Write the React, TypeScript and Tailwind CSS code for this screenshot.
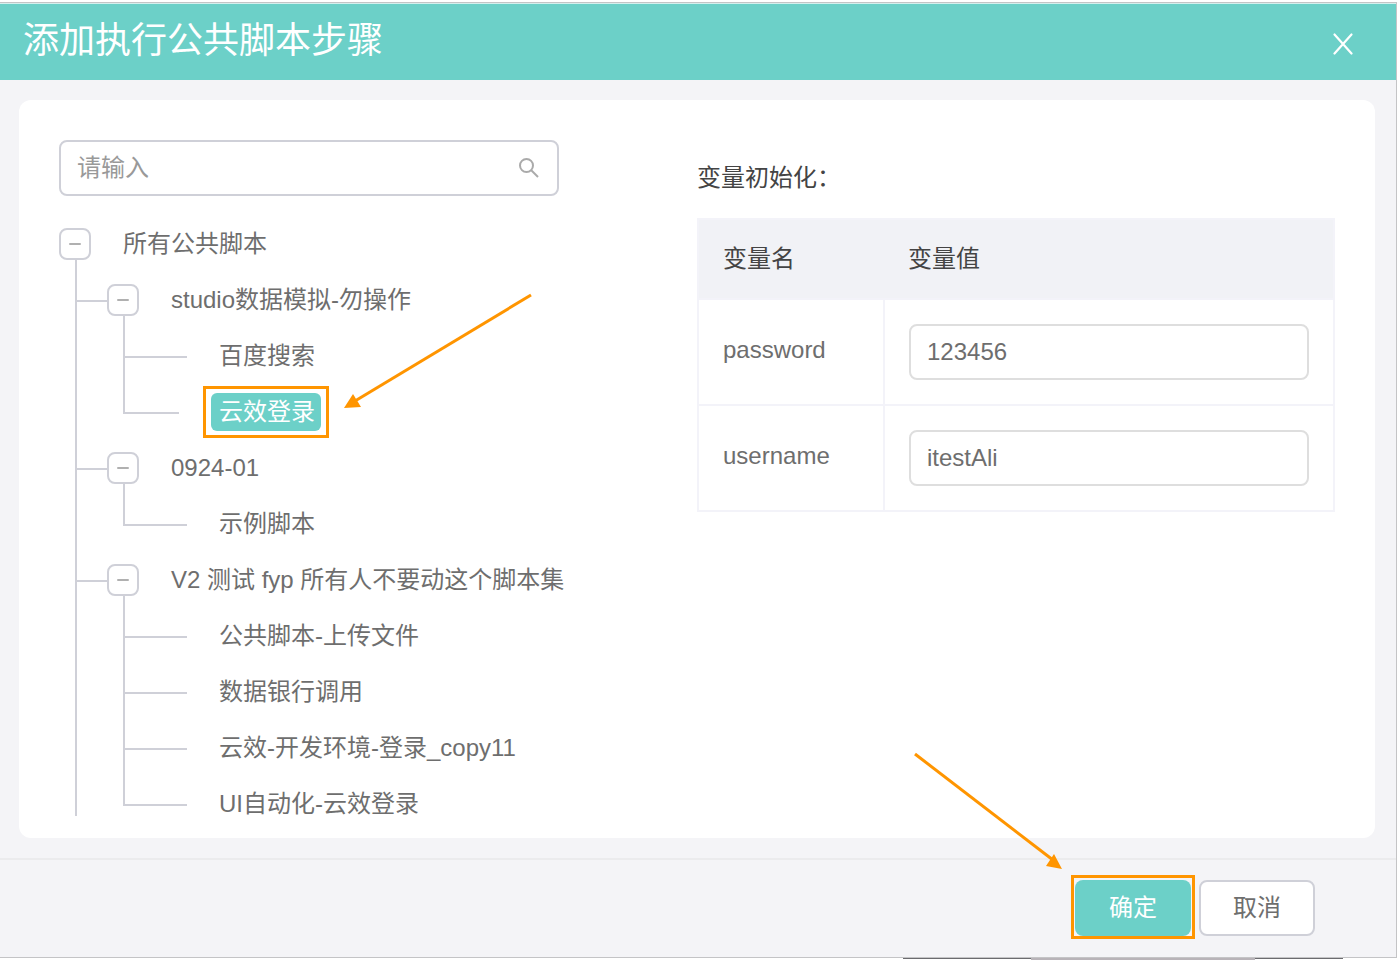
import { useState } from "react";
import clsx from "clsx";

type Leaf = { id: string; name: string };
type Group = { id: string; name: string; scripts: Leaf[] };

const GROUPS: Group[] = [
  {
    id: "studio",
    name: "studio数据模拟-勿操作",
    scripts: [
      { id: "baidu", name: "百度搜索" },
      { id: "yunxiao", name: "云效登录" },
    ],
  },
  {
    id: "0924",
    name: "0924-01",
    scripts: [{ id: "demo", name: "示例脚本" }],
  },
  {
    id: "v2",
    name: "V2 测试 fyp 所有人不要动这个脚本集",
    scripts: [
      { id: "upload", name: "公共脚本-上传文件" },
      { id: "bank", name: "数据银行调用" },
      { id: "copy11", name: "云效-开发环境-登录_copy11" },
      { id: "ui", name: "UI自动化-云效登录" },
    ],
  },
];

const VARIABLES = [
  { name: "password", value: "123456" },
  { name: "username", value: "itestAli" },
];

function Toggle({ open, onClick, label }: { open: boolean; onClick: () => void; label: string }) {
  return (
    <span className="flex h-14 w-8 shrink-0 flex-col pt-3">
      <button
        type="button"
        aria-expanded={open}
        aria-label={label}
        onClick={onClick}
        className="flex h-8 w-8 shrink-0 items-center justify-center rounded-lg border-2 border-[#cfd0d8] bg-white"
      >
        <svg viewBox="0 0 12 12" className="h-3 w-3" stroke="#b0b0b0" strokeWidth="2" strokeLinecap="round">
          <path d={open ? "M1 6h10" : "M1 6h10M6 1v10"} />
        </svg>
      </button>
      {open && <span className="ml-4 w-0.5 flex-1 bg-[#cfd0d8]" />}
    </span>
  );
}

function ScriptItem({
  script,
  last,
  selected,
  onSelect,
}: {
  script: Leaf;
  last: boolean;
  selected: boolean;
  onSelect: () => void;
}) {
  return (
    <li className="flex h-14 items-center">
      <span className="flex h-14 w-16 shrink-0 flex-col">
        <span className={clsx("h-[30px] border-b-2 border-l-2 border-[#cfd0d8]", selected ? "w-14" : "w-16")} />
        {!last && <span className="flex-1 border-l-2 border-[#cfd0d8]" />}
      </span>
      <span className="relative ml-6">
        <button
          type="button"
          onClick={onSelect}
          className={clsx(
            "block h-[38px] rounded-md pr-1.5 pl-2 leading-9 whitespace-nowrap",
            selected && "bg-[#6cd0c8] text-white"
          )}
        >
          {script.name}
        </button>
        {script.id === "yunxiao" && (
          <>
            <span className="pointer-events-none absolute -inset-x-2 -inset-y-[7px] border-3 border-[#ff9500]" />
            <svg
              viewBox="0 0 190 118"
              className="pointer-events-none absolute -top-[100px] left-[132px] h-[118px] w-[190px]"
              aria-hidden="true"
            >
              <path d="M188 2 12 108" stroke="#ff9500" strokeWidth="3" fill="none" />
              <path d="M1 115 10 101 18 114Z" fill="#ff9500" />
            </svg>
          </>
        )}
      </span>
    </li>
  );
}

function ScriptTree() {
  const [closed, setClosed] = useState<string[]>([]);
  const [selected, setSelected] = useState("yunxiao");

  const toggle = (id: string) =>
    setClosed((prev) => (prev.includes(id) ? prev.filter((c) => c !== id) : [...prev, id]));

  const rootOpen = !closed.includes("root");

  return (
    <div className="mt-5 max-h-[600px] overflow-hidden text-2xl text-[#6e6e6e]">
      <div className="flex h-14 items-center gap-8">
        <Toggle open={rootOpen} onClick={() => toggle("root")} label="所有公共脚本" />
        <span>所有公共脚本</span>
      </div>
      {rootOpen && (
        <ul className="ml-4">
          {GROUPS.map((group) => {
            const open = !closed.includes(group.id);
            return (
              <li key={group.id} className="border-l-2 border-[#cfd0d8]">
                <div className="flex h-14 items-center">
                  <span className="h-[30px] w-[30px] self-start border-b-2 border-[#cfd0d8]" />
                  <Toggle open={open} onClick={() => toggle(group.id)} label={group.name} />
                  <span className="ml-8 whitespace-nowrap">{group.name}</span>
                </div>
                {open && (
                  <ul className="ml-[46px]">
                    {group.scripts.map((script, i) => (
                      <ScriptItem
                        key={script.id}
                        script={script}
                        last={i === group.scripts.length - 1}
                        selected={selected === script.id}
                        onSelect={() => setSelected(script.id)}
                      />
                    ))}
                  </ul>
                )}
              </li>
            );
          })}
        </ul>
      )}
    </div>
  );
}

function VariableTable() {
  const [values, setValues] = useState(VARIABLES);

  return (
    <table className="w-full table-fixed border-collapse border-2 border-[#f3f3f9] text-left text-2xl">
      <thead>
        <tr className="h-20 bg-[#f1f2f6] text-[#444]">
          <th className="w-[186px] px-6 font-normal">变量名</th>
          <th className="px-6 font-normal">变量值</th>
        </tr>
      </thead>
      <tbody>
        {values.map((v, i) => (
          <tr key={v.name} className="text-[#6e6e6e]">
            <td className="border-2 border-[#f3f3f9] px-6 pb-1">
              <label htmlFor={v.name}>{v.name}</label>
            </td>
            <td className="border-2 border-[#f3f3f9] p-6">
              <input
                id={v.name}
                type="text"
                value={v.value}
                onChange={(e) =>
                  setValues(values.map((x, j) => (j === i ? { ...x, value: e.target.value } : x)))
                }
                className="block h-14 w-full rounded-lg border-2 border-[#dedede] bg-white px-4 outline-none"
              />
            </td>
          </tr>
        ))}
      </tbody>
    </table>
  );
}

export default function App() {
  const [keyword, setKeyword] = useState("");

  return (
    <div className="min-h-screen bg-white pt-0.5 pr-px font-['Liberation_Sans','Noto_Sans_CJK_SC',sans-serif]">
      <div className="border-y border-r border-[#c4c4c6] bg-[#f4f4f7]">
        <header className="flex h-[77px] items-center justify-between border-t border-[#d5f0ee] bg-[#6cd0c8] pr-[43px] pb-0.5 pl-[23px] text-white">
          <h1 className="text-4xl font-normal">添加执行公共脚本步骤</h1>
          <button type="button" aria-label="关闭" className="mt-1.5">
            <svg viewBox="0 0 20 22" className="h-[22px] w-5" stroke="currentColor" strokeWidth="2.2" strokeLinecap="round">
              <path d="M1.500 1.500 18.500 20.500M18.500 1.500 1.500 20.500" />
            </svg>
          </button>
        </header>

        <main className="py-5 pr-[21px] pl-[19px]">
          <div className="flex rounded-xl bg-white px-10 pt-10 pb-[22px]">
            <section className="w-1/2">
              <div className="flex h-14 w-[500px] items-center rounded-lg border-2 border-[#cfd0d8] bg-white pr-[18px] pl-4">
                <input
                  type="text"
                  aria-label="请输入"
                  placeholder="请输入"
                  value={keyword}
                  onChange={(e) => setKeyword(e.target.value)}
                  className="min-w-0 flex-1 text-2xl text-[#6e6e6e] outline-none placeholder:text-[#999]"
                />
                <svg viewBox="0 0 20 20" className="h-5 w-5" fill="none" stroke="#aaa" strokeWidth="2">
                  <circle cx="7.500" cy="7.500" r="6.500" />
                  <path d="M12 12l7 7" />
                </svg>
              </div>
              <ScriptTree />
            </section>

            <section className="w-1/2 pt-5">
              <h2 className="mb-[22px] text-2xl leading-9 text-[#444]">变量初始化：</h2>
              <VariableTable />
            </section>
          </div>
        </main>

        <footer className="flex justify-end gap-2 border-t-2 border-[#ebebed] pt-5 pr-[81px] pb-[21px] text-2xl">
          <div className="relative">
            <button type="button" className="h-14 w-[116px] rounded-lg bg-[#6cd0c8] text-white">
              确定
            </button>
            <span className="pointer-events-none absolute -inset-x-1 -top-[5px] -bottom-[3px] border-3 border-[#ff9500]" />
            <svg
              viewBox="0 0 150 118"
              className="pointer-events-none absolute -top-32 -left-[162px] h-[118px] w-[150px]"
              aria-hidden="true"
            >
              <path d="M2 2 140 108" stroke="#ff9500" strokeWidth="3" fill="none" />
              <path d="M149 117 141 102 133 114Z" fill="#ff9500" />
            </svg>
          </div>
          <button type="button" className="h-14 w-[116px] rounded-lg border-2 border-[#cfd0d8] bg-white text-[#6e6e6e]">
            取消
          </button>
        </footer>
      </div>
      <div className="flex h-0.5 justify-end pr-[54px]">
        <span className="h-px w-32 bg-[#6b6b6f]" />
        <span className="h-0.5 w-56 bg-[#b8b3b8]" />
        <span className="h-px w-22 bg-[#6b6b6f]" />
      </div>
    </div>
  );
}
